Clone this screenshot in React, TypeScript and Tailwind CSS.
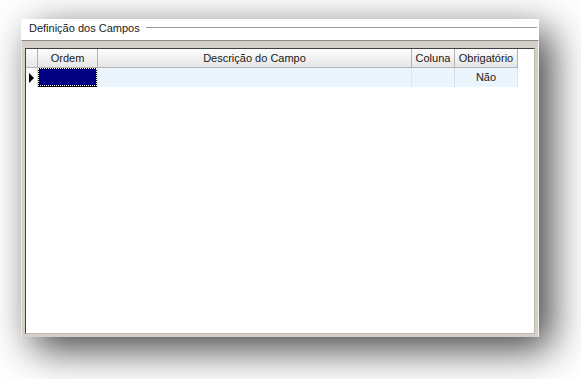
const FONT = { fontFamily: '"Liberation Sans", Arial, sans-serif' };

const COLS = [
  { label: "Ordem", w: "w-[60px]" },
  { label: "Descrição do Campo", w: "w-[314px]" },
  { label: "Coluna", w: "w-[43px]" },
  { label: "Obrigatório", w: "w-[63px]" },
];

export default function App() {
  return (
    <div className="w-[581px] h-[379px] bg-white pt-[19px] pl-[21px] text-[11px] text-[#1a1a1a]" style={FONT}>
      <div className="flex h-[318px] w-[518px] flex-col bg-white shadow-[12px_12px_38px_rgba(0,0,0,0.75)]">
        {/* group caption */}
        <div className="flex h-[21px] shrink-0 pl-2 pr-[2px]">
          <span className="mt-[2px] leading-[14px]">Definição dos Campos</span>
          <div className="ml-[6px] mt-[8px] h-px flex-1 bg-[#9a9a9a]" />
        </div>

        {/* sunken frame */}
        <div className="flex flex-1 flex-col border-t border-l border-r border-t-[#8a8a8a] border-l-[#ebe9e4] border-r-[#f2f1ee] bg-[#d4d0c8] pt-[7px] pl-[3px] pr-[3px] pb-[3px]">
          <div className="flex-1 border border-t-[#404040] border-l-[#404040] border-r-[#bcb9b2] border-b-[#bcb9b2] bg-white">
            <GridHeader />
            <GridRow />
          </div>
        </div>
      </div>
    </div>
  );
}

function GridHeader() {
  return (
    <div className="flex h-[19px]">
      <div className="w-[12px] border-r border-b border-[#b4b4b4] bg-gradient-to-b from-[#fcfcfc] to-[#e6e6e6]" />
      {COLS.map((c) => (
        <div
          key={c.label}
          className={`${c.w} flex items-center justify-center border-r border-b border-[#b4b4b4] bg-gradient-to-b from-[#fcfcfc] to-[#e6e6e6] leading-none`}
        >
          {c.label}
        </div>
      ))}
    </div>
  );
}

function GridRow() {
  return (
    <div className="flex h-[19px]">
      <div className="flex w-[12px] items-center justify-center border-r border-[#d6d6d6] bg-[#fafafa]">
        <svg width="5" height="10" viewBox="0 0 5 10">
          <polygon points="0,0 5,5 0,10" fill="#000" />
        </svg>
      </div>
      {/* selected Ordem cell */}
      <div className="w-[60px] border-r border-[#d6dde4] bg-black pb-px">
        <div className="h-full border border-dotted border-white bg-[#000080] bg-clip-padding" />
      </div>
      <div className="w-[314px] border-r border-[#dfe5ea] bg-[#ebf5fd]" />
      <div className="w-[43px] border-r border-[#d6dde4] bg-[#ebf5fd]" />
      <div className="flex w-[63px] items-center justify-center border-r border-[#dfe5ea] bg-[#ebf5fd] leading-none">
        Não
      </div>
    </div>
  );
}
